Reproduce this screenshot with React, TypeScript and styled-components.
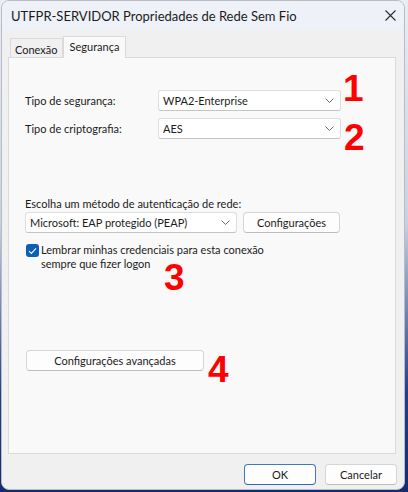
import * as React from "react";
import styled, { createGlobalStyle } from "styled-components";

const GlobalStyle = createGlobalStyle`
  html, body {
    margin: 0;
    padding: 0;
    width: 408px;
    height: 492px;
    overflow: hidden;
    background: linear-gradient(180deg, #e9edf4 0%, #c7d2e6 45%, #1f3f8c 80%, #132c6e 100%);
    font-family: Lato, "Noto Sans", sans-serif;
  }
`;

const Window = styled.div`
  box-sizing: border-box;
  width: 404px;
  height: 490px;
  margin-left: 1px;
  border: 1px solid #b9bcc2;
  border-radius: 8px;
  background: #f0f0f0;
  display: flex;
  flex-direction: column;
  overflow: hidden;
`;

const TitleBar = styled.div`
  height: 29px;
  display: flex;
  align-items: center;
  justify-content: space-between;
  padding: 0 8px 0 9px;
  background: #eef1f7;
  font-size: 13px;
  color: #1b1b1b;
`;

const TabRow = styled.div`
  display: flex;
  align-items: flex-end;
  height: 27px;
  padding-left: 8px;
`;

const Tab = styled.div<{ $active?: boolean }>`
  box-sizing: border-box;
  height: ${p => (p.$active ? "22px" : "19px")};
  padding: ${p => (p.$active ? "2px 6px 0 6px" : "3px 4px 0 4px")};
  font-size: 11px;
  line-height: 15px;
  color: #1b1b1b;
  background: ${p => (p.$active ? "#f9f9f9" : "#f0f0f0")};
  border: 1px solid #dadada;
  border-bottom: none;
  margin-bottom: ${p => (p.$active ? "-1px" : "0")};
  position: relative;
  z-index: ${p => (p.$active ? 1 : 0)};
`;

const Panel = styled.div`
  position: relative;
  box-sizing: border-box;
  height: 397px;
  margin: 0 8px 0 6px;
  padding: 32px 16px 0 16px;
  border: 1px solid #dadada;
  background: #f9f9f9;
  font-size: 11px;
  line-height: 15px;
  color: #1b1b1b;
`;

const FieldRow = styled.div<{ $gap?: number }>`
  display: flex;
  align-items: center;
  margin-bottom: ${p => p.$gap ?? 0}px;
`;

const Label = styled.div`
  width: 133px;
`;

const Select = styled.div<{ $width: number }>`
  box-sizing: border-box;
  width: ${p => p.$width}px;
  height: 21px;
  display: flex;
  align-items: center;
  justify-content: space-between;
  padding: 0 6px 0 4px;
  background: #ffffff;
  border: 1px solid #dedede;
  border-bottom-color: #c4c4c4;
  border-radius: 3px;
`;

const Chevron = () => (
  <svg width="9" height="5" viewBox="0 0 9 5">
    <path d="M0.5 0.5 L4.5 4.5 L8.5 0.5" fill="none" stroke="#6a6a6a" strokeWidth="1" />
  </svg>
);

const SectionLabel = styled.div`
  margin-top: 57px;
  margin-bottom: 1px;
`;

const Button = styled.div<{ $width: number; $primary?: boolean }>`
  box-sizing: border-box;
  width: ${p => p.$width}px;
  height: 21px;
  display: flex;
  align-items: center;
  justify-content: center;
  background: #fdfdfd;
  border: 1px solid ${p => (p.$primary ? "#3a7bc8" : "#d6d6d6")};
  border-bottom-color: ${p => (p.$primary ? "#2a6ab8" : "#bdbdbd")};
  border-radius: 4px;
  font-size: 11px;
  color: #1b1b1b;
`;

const CheckRow = styled.div`
  display: flex;
  align-items: flex-start;
  margin-top: 10px;
  line-height: 14px;
`;

const CheckBox = styled.div`
  flex: none;
  width: 13px;
  height: 13px;
  margin: 1px 2px 0 1px;
  border-radius: 3px;
  background: #0a5fb6;
  display: flex;
  align-items: center;
  justify-content: center;
`;

const AdvancedButton = styled(Button)`
  margin-top: 79px;
  margin-left: 1px;
`;

const Marker = styled.div<{ $x: number; $y: number }>`
  position: absolute;
  left: ${p => p.$x}px;
  top: ${p => p.$y}px;
  font-family: "Liberation Sans", Arial, sans-serif;
  font-weight: bold;
  font-size: 37px;
  line-height: 1;
  color: #ff0000;
`;

const Footer = styled.div`
  display: flex;
  justify-content: flex-end;
  gap: 9px;
  padding: 10px 7px 0 0;
`;

export default function App() {
  return (
    <>
      <GlobalStyle />
      <Window>
        <TitleBar>
          <span>UTFPR-SERVIDOR Propriedades de Rede Sem Fio</span>
          <svg width="11" height="11" viewBox="0 0 11 11">
            <path d="M0.5 0.5 L10.5 10.5 M10.5 0.5 L0.5 10.5" stroke="#2b2b2b" strokeWidth="1.1" />
          </svg>
        </TitleBar>
        <TabRow>
          <Tab>Conexão</Tab>
          <Tab $active>Segurança</Tab>
        </TabRow>
        <Panel>
          <FieldRow $gap={7}>
            <Label>Tipo de segurança:</Label>
            <Select $width={183}>
              <span>WPA2-Enterprise</span>
              <Chevron />
            </Select>
          </FieldRow>
          <FieldRow>
            <Label>Tipo de criptografia:</Label>
            <Select $width={183}>
              <span>AES</span>
              <Chevron />
            </Select>
          </FieldRow>

          <SectionLabel>Escolha um método de autenticação de rede:</SectionLabel>
          <FieldRow>
            <Select $width={212}>
              <span>Microsoft: EAP protegido (PEAP)</span>
              <Chevron />
            </Select>
            <Button $width={97} style={{ marginLeft: 6 }}>
              Configurações
            </Button>
          </FieldRow>
          <CheckRow>
            <CheckBox>
              <svg width="9" height="8" viewBox="0 0 9 8">
                <path d="M1 4.2 L3.4 6.4 L8 1.4" fill="none" stroke="#ffffff" strokeWidth="1.1" />
              </svg>
            </CheckBox>
            <span>
              Lembrar minhas credenciais para esta conexão
              <br />
              sempre que fizer logon
            </span>
          </CheckRow>

          <AdvancedButton $width={178}>Configurações avançadas</AdvancedButton>

          <Marker $x={334} $y={12}>1</Marker>
          <Marker $x={335} $y={61}>2</Marker>
          <Marker $x={155} $y={201}>3</Marker>
          <Marker $x={199} $y={293}>4</Marker>
        </Panel>
        <Footer>
          <Button $width={72} $primary>OK</Button>
          <Button $width={72}>Cancelar</Button>
        </Footer>
      </Window>
    </>
  );
}
